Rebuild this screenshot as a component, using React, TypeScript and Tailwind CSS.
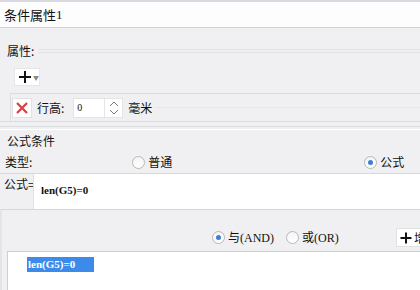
const cjk = { fontFamily: '"Noto Sans CJK SC", "Noto Sans", sans-serif' };
const serif = { fontFamily: '"Liberation Serif", "Noto Sans CJK SC", serif' };

const Radio = ({ checked }: { checked?: boolean }) => (
  <span className="w-[13px] h-[13px] rounded-full border border-[#b8b8b8] bg-gradient-to-b from-[#f4f4f4] to-white flex items-center justify-center shrink-0">
    {checked && <span className="w-[5px] h-[5px] rounded-full bg-[#3d7fd8]" />}
  </span>
);

const App = () => {
  return (
    <div
      className="w-[420px] h-[290px] overflow-hidden bg-[#f0f0f2] border-t-2 border-[#d8d8e0] text-[12px] text-[#111] flex flex-col"
      style={cjk}
    >
      {/* title */}
      <div className="h-[26px] shrink-0 bg-[#fdfdfd] border-b border-[#d2d2d6] px-[4px] flex items-center text-[13px]">
        条件属性<span style={serif}>1</span>
      </div>

      {/* 属性 */}
      <div className="h-[16px] mt-[15px] pl-[7px] flex items-center">
        <span>属性:</span>
        <div className="flex-1 ml-[4px] h-[4px] border-t border-[#e2e2e6] border-b" />
      </div>

      <div className="mt-[9px] ml-[14px] w-[26px] h-[18px] bg-white border border-[#e6e6e6] flex items-center pl-[3px] gap-[1px]">
        <svg width="14" height="14" viewBox="0 0 14 14">
          <path d="M7 1v12M1 7h12" stroke="#111" strokeWidth="2" />
        </svg>
        <span className="text-[6px] text-[#888]">▼</span>
      </div>

      {/* row height */}
      <div className="mt-[7px] ml-[10px] border-t border-l border-[#dcdcdc] h-[28px] flex items-center pl-[1px]">
        <div className="w-[20px] h-[20px] bg-white border border-[#e2e2e2] flex items-center justify-center">
          <svg width="14" height="14" viewBox="0 0 14 14">
            <path d="M2 2l10 10M12 2L2 12" stroke="#e23b3b" strokeWidth="2.2" />
          </svg>
        </div>
        <span className="ml-[5px]">行高:</span>
        <div className="ml-[9px] w-[32px] h-[20px] bg-white border border-[#e4e4e4] flex items-center pl-[3px] text-[10px]" style={serif}>
          0
        </div>
        <div className="w-[18px] h-[20px] bg-white border border-l-0 border-[#e4e4e4] flex flex-col items-center justify-center">
          <svg width="12" height="16" viewBox="0 0 12 16">
            <path d="M2 6l4-4 4 4M2 10l4 4 4-4" stroke="#777" strokeWidth="1" fill="none" />
          </svg>
        </div>
        <span className="ml-[5px]">毫米</span>
        <div className="flex-1 ml-[3px] border-t border-[#e6e6e8]" />
      </div>

      <div className="h-[6px] border-t border-b border-[#dcdcde]" />

      {/* 公式条件 */}
      <div className="h-[22px] mt-[2px] pl-[7px] flex items-center border-t border-white">公式条件</div>
      <div className="h-[22px] pl-[5px] flex items-center">
        <span>类型:</span>
        <div className="ml-[100px] flex items-center gap-[3px]">
          <Radio />
          <span>普通</span>
        </div>
        <div className="ml-[192px] flex items-center gap-[3px]">
          <Radio checked />
          <span>公式</span>
        </div>
      </div>

      <div className="border-t border-[#d8d8da] h-[36px] flex">
        <span className="pl-[4px] pt-[1px] w-[33px] whitespace-nowrap">公式=</span>
        <div className="flex-1 bg-white border-l border-[#e0e0e0] pt-[8px] pl-[7px] text-[11px] font-bold" style={serif}>
          len(G5)=0
        </div>
      </div>

      <div className="border-t border-[#d6d6d8] h-[42px] flex items-center pt-[14px] border-l-2 border-l-[#e4e4e6]">
        <div className="ml-[210px] flex items-center gap-[3px]">
          <Radio checked />
          <span>与<span style={serif}>(AND)</span></span>
        </div>
        <div className="ml-[12px] flex items-center gap-[3px]">
          <Radio />
          <span>或<span style={serif}>(OR)</span></span>
        </div>
        <div className="ml-auto w-[24px] h-[19px] bg-white border border-[#e2e2e2] border-r-0 flex items-center pl-[3px] gap-[2px] overflow-hidden whitespace-nowrap">
          <svg width="12" height="12" viewBox="0 0 12 12" className="shrink-0">
            <path d="M6 0.5v11M0.5 6h11" stroke="#111" strokeWidth="2" />
          </svg>
          <span>增加</span>
        </div>
      </div>

      <div className="flex-1 flex border-l-2 border-[#e4e4e6]">
        <div className="w-[5px]" />
        <div className="flex-1 bg-white border-t border-l border-[#cfcfd2] pl-[19px] pt-[2px]">
          <span className="inline-block bg-[#3c8bea] text-white text-[11px] font-bold px-[1px] w-[67px] h-[15px] leading-[15px]" style={serif}>
            len(G5)=0
          </span>
        </div>
      </div>
    </div>
  );
};

export default App;
